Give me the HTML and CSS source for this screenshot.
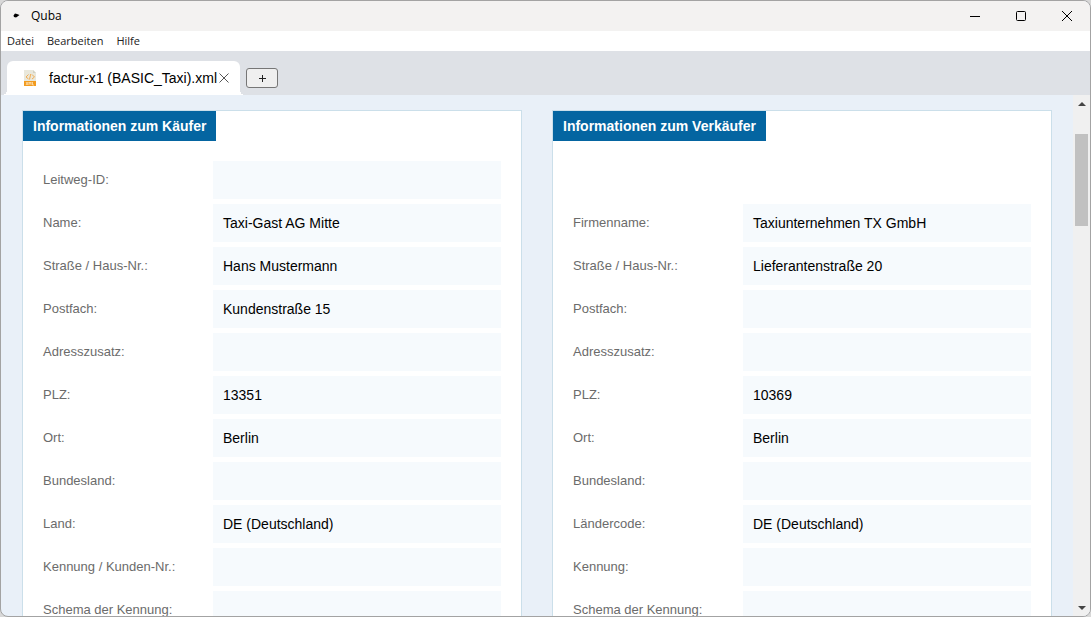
FILE: index.html
```html
<!DOCTYPE html>
<html lang="de">
<head>
<meta charset="utf-8">
<meta name="viewport" content="width=device-width, initial-scale=1">
<title>Quba</title>
<link rel="stylesheet" href="styles.css">
</head>
<body>
<div class="window">
  <header class="titlebar">
    <svg class="app-icon" viewBox="0 0 16 16" aria-hidden="true"><path d="M5.500 7.500 7 5.500 9 6 11.500 7 9.500 8.500 8 9.500 6 9z"/></svg>
    <span class="app-name">Quba</span>
    <div class="window-controls">
      <button type="button" aria-label="Minimieren"><svg viewBox="0 0 12 12"><path d="M1 6.500h10"/></svg></button>
      <button type="button" aria-label="Maximieren"><svg viewBox="0 0 12 12"><rect x="1.500" y="1.500" width="9" height="9" rx="1"/></svg></button>
      <button type="button" aria-label="Schließen"><svg viewBox="0 0 12 12"><path d="m1 1 10 10M11 1 1 11"/></svg></button>
    </div>
  </header>
  <nav class="menubar">
    <button type="button">Datei</button>
    <button type="button">Bearbeiten</button>
    <button type="button">Hilfe</button>
  </nav>
  <div class="tabs">
    <div class="tab">
      <svg class="file-icon" viewBox="0 0 14 17" aria-hidden="true">
        <path fill="#e9e8dc" d="M1 0h9l3 3v13H1z"/>
        <path fill="#d3d1c2" d="M10 0l3 3h-3z"/>
        <path fill="none" stroke="#f3ad52" d="M5.500 4.500 3 7l2.500 2M9 4.500l2.500 2.500L9 9M7.700 4l-1.200 5.500"/>
        <path fill="#f29b1f" d="M1 11h12v5H1z"/>
        <path fill="none" stroke="#fde3bb" stroke-width=".8" d="m3 12 2 3M5 12l-2 3M6 15v-3l1 1.500L8 12v3M9.500 12v3H11"/>
      </svg>
      <span class="tab-title">factur-x1 (BASIC_Taxi).xml</span>
      <button type="button" class="tab-close" aria-label="Tab schließen"><svg viewBox="0 0 12 12"><path d="m1.500 1.500 9 9M10.500 1.500l-9 9"/></svg></button>
    </div>
    <button type="button" class="tab-add" aria-label="Neuer Tab"><svg viewBox="0 0 8 8"><path d="M4.500 1v7M1 4.500h7"/></svg></button>
  </div>
  <div class="viewport">
    <main class="content">
      <section class="box">
        <h2>Informationen zum Käufer</h2>
        <dl>
          <div class="row"><dt>Leitweg-ID:</dt><dd></dd></div>
          <div class="row"><dt>Name:</dt><dd>Taxi-Gast AG Mitte</dd></div>
          <div class="row"><dt>Straße / Haus-Nr.:</dt><dd>Hans Mustermann</dd></div>
          <div class="row"><dt>Postfach:</dt><dd>Kundenstraße 15</dd></div>
          <div class="row"><dt>Adresszusatz:</dt><dd></dd></div>
          <div class="row"><dt>PLZ:</dt><dd>13351</dd></div>
          <div class="row"><dt>Ort:</dt><dd>Berlin</dd></div>
          <div class="row"><dt>Bundesland:</dt><dd></dd></div>
          <div class="row"><dt>Land:</dt><dd>DE (Deutschland)</dd></div>
          <div class="row"><dt>Kennung / Kunden-Nr.:</dt><dd></dd></div>
          <div class="row"><dt>Schema der Kennung:</dt><dd></dd></div>
        </dl>
      </section>
      <section class="box">
        <h2>Informationen zum Verkäufer</h2>
        <dl>
          <div class="row spacer"></div>
          <div class="row"><dt>Firmenname:</dt><dd>Taxiunternehmen TX GmbH</dd></div>
          <div class="row"><dt>Straße / Haus-Nr.:</dt><dd>Lieferantenstraße 20</dd></div>
          <div class="row"><dt>Postfach:</dt><dd></dd></div>
          <div class="row"><dt>Adresszusatz:</dt><dd></dd></div>
          <div class="row"><dt>PLZ:</dt><dd>10369</dd></div>
          <div class="row"><dt>Ort:</dt><dd>Berlin</dd></div>
          <div class="row"><dt>Bundesland:</dt><dd></dd></div>
          <div class="row"><dt>Ländercode:</dt><dd>DE (Deutschland)</dd></div>
          <div class="row"><dt>Kennung:</dt><dd></dd></div>
          <div class="row"><dt>Schema der Kennung:</dt><dd></dd></div>
        </dl>
      </section>
    </main>
    <div class="scrollbar">
      <button type="button" aria-label="Nach oben"><svg viewBox="0 0 8 4"><path d="M0 4h8L4 0z"/></svg></button>
      <div class="track"><div class="thumb"></div></div>
      <button type="button" aria-label="Nach unten"><svg viewBox="0 0 8 4"><path d="M0 0h8L4 4z"/></svg></button>
    </div>
  </div>
</div>
</body>
</html>
```

FILE: styles.css
```css
* { box-sizing: border-box; }

body {
  margin: 0;
  background: #d8d8d8;
  color: #000;
  font: 14px/20px "Liberation Sans", Arial, sans-serif;
}

button {
  border: 0;
  padding: 0;
  background: none;
  color: inherit;
  font: inherit;
}

svg { display: block; }

.window {
  display: flex;
  flex-direction: column;
  height: 100vh;
  overflow: hidden;
  border: 1px solid #a3a3a3;
  border-radius: 8px;
  background: #e9f0f8;
}

.titlebar {
  display: flex;
  flex: none;
  align-items: center;
  height: 30px;
  padding-left: 7px;
  background: #f3f2f1;
  font: 12px/16px "Open Sans", "Segoe UI", sans-serif;
}

.app-icon { width: 16px; height: 16px; }
.app-name { margin-left: 7px; }

.window-controls {
  display: flex;
  align-self: stretch;
  margin-left: auto;
}

.window-controls button {
  display: grid;
  place-items: center;
  width: 46px;
}

.window-controls svg {
  width: 12px;
  height: 12px;
  fill: none;
  stroke: #000;
}

.menubar {
  display: flex;
  flex: none;
  gap: 13px;
  height: 20px;
  padding-left: 6px;
  background: #fff;
  color: #222;
  font: 11px/20px "Open Sans", "Segoe UI", sans-serif;
}

.tabs {
  display: flex;
  flex: none;
  align-items: flex-end;
  gap: 6px;
  height: 44px;
  padding-left: 6px;
  background: #dee1e6;
}

.tab {
  position: relative;
  display: flex;
  align-items: center;
  height: 34px;
  padding: 0 10px 0 16px;
  border-radius: 6px 6px 0 0;
  background: #fff;
}

.tab::before,
.tab::after {
  content: "";
  position: absolute;
  bottom: 0;
  width: 5px;
  height: 5px;
}

.tab::before {
  right: 100%;
  background: radial-gradient(circle at 0 0, transparent 5px, #fff 5px);
}

.tab::after {
  left: 100%;
  background: radial-gradient(circle at 100% 0, transparent 5px, #fff 5px);
}

.file-icon { width: 14px; height: 17px; }
.tab-title { margin-left: 12px; }
.tab-close { margin-left: 1px; }

.tab-close svg {
  width: 12px;
  height: 12px;
  fill: none;
  stroke: #555;
}

.tab-add {
  display: grid;
  place-items: center;
  width: 32px;
  height: 20px;
  margin-bottom: 7px;
  border: 1px solid #767676;
  border-radius: 3px;
  background: #efefef;
}

.tab-add svg {
  width: 8px;
  height: 8px;
  stroke: #222;
}

.viewport {
  display: flex;
  flex: 1;
  min-height: 0;
}

.content {
  display: grid;
  flex: 1;
  grid-template-columns: 1fr 1fr;
  align-items: start;
  gap: 30px;
  min-width: 0;
  overflow: hidden;
  padding: 15px 21px;
}

.box {
  border: 1px solid #cbdfea;
  background: #fff;
}

.box h2 {
  width: fit-content;
  margin: 0;
  padding: 5px 10px;
  background: #0465a1;
  color: #fff;
  font-size: 14px;
  line-height: 20px;
}

.box dl {
  display: grid;
  gap: 5px;
  margin: 0;
  padding: 20px;
}

.row {
  display: grid;
  grid-template-columns: 170px 1fr;
  height: 38px;
}

.row dt {
  color: #6b6b6b;
  font-size: 13px;
  line-height: 38px;
}

.row dd {
  margin: 0;
  padding: 0 10px;
  background: #f6fafd;
  line-height: 38px;
}

.scrollbar {
  display: flex;
  flex: none;
  flex-direction: column;
  width: 17px;
  background: #f0f0f0;
}

.scrollbar button {
  display: grid;
  place-items: center;
  height: 17px;
}

.scrollbar svg {
  width: 8px;
  height: 4px;
  fill: #444;
}

.track {
  flex: 1;
  padding: 22px 2px 0;
}

.thumb {
  height: 92px;
  background: #c1c1c1;
}
```
